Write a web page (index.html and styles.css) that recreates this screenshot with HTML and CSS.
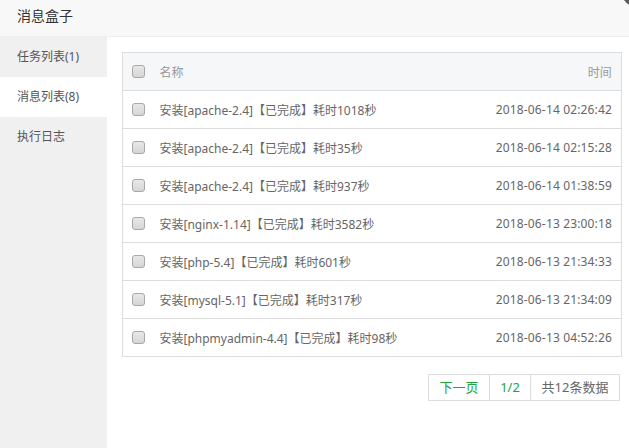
FILE: index.html
```html
<!DOCTYPE html>
<html lang="zh">
<head>
<meta charset="UTF-8">
<title>消息盒子</title>
<link rel="stylesheet" href="styles.css">
</head>
<body>

<div class="box">
<div class="header">消息盒子</div>
<span class="close"></span>

<div class="main">
<div class="side">
<div class="item">任务列表(1)</div>
<div class="item active">消息列表(8)</div>
<div class="item">执行日志</div>
</div>

<div class="content">
<table class="table">
<tr class="head"><td class="ck"><span class="check"></span></td><td>名称</td><td class="time">时间</td></tr>
<tr><td class="ck"><span class="check"></span></td><td>安装[apache-2.4]【已完成】耗时1018秒</td><td class="time">2018-06-14 02:26:42</td></tr>
<tr><td class="ck"><span class="check"></span></td><td>安装[apache-2.4]【已完成】耗时35秒</td><td class="time">2018-06-14 02:15:28</td></tr>
<tr><td class="ck"><span class="check"></span></td><td>安装[apache-2.4]【已完成】耗时937秒</td><td class="time">2018-06-14 01:38:59</td></tr>
<tr><td class="ck"><span class="check"></span></td><td>安装[nginx-1.14]【已完成】耗时3582秒</td><td class="time">2018-06-13 23:00:18</td></tr>
<tr><td class="ck"><span class="check"></span></td><td>安装[php-5.4]【已完成】耗时601秒</td><td class="time">2018-06-13 21:34:33</td></tr>
<tr><td class="ck"><span class="check"></span></td><td>安装[mysql-5.1]【已完成】耗时317秒</td><td class="time">2018-06-13 21:34:09</td></tr>
<tr><td class="ck"><span class="check"></span></td><td>安装[phpmyadmin-4.4]【已完成】耗时98秒</td><td class="time">2018-06-13 04:52:26</td></tr>
</table>

<div class="pager">
<a class="next green">下一页</a><span class="num green">1/2</span><span class="total">共12条数据</span>
</div>
</div>
</div>
</div>

</body>
</html>
```

FILE: styles.css
```css
body {
    margin: 0;
    font-family: "Noto Sans", "Noto Sans CJK SC", sans-serif;
    font-size: 12px;
    color: #666;
    background-color: #fff;
    overflow: hidden;
}
.box { position: relative; height: 448px; }
.header {
    height: 36px;
    line-height: 32px;
    padding-left: 17px;
    font-size: 14px;
    color: #333;
    background-color: #f8f8f8;
    border-bottom: 1px solid #eee;
}
.close {
    position: absolute;
    right: -31px;
    top: -32px;
    width: 40px;
    height: 40px;
    border-radius: 50%;
    background-color: #5a5a5a;
}
.main { display: flex; height: 411px; }
.side { width: 107px; background-color: #f0f0f0; }
.item {
    height: 40px;
    line-height: 40px;
    padding-left: 17px;
    color: #555;
}
.item.active { background-color: #fff; }
.content { padding: 15px 0 0 15px; }
.table {
    width: 500px;
    border-collapse: collapse;
    border: 1px solid #ddd;
}
.table tr { height: 38px; border-bottom: 1px solid #ddd; }
.table td { padding: 0; vertical-align: middle; }
.head { background-color: #f6f7f9; color: #999; }
.ck { width: 37px; padding-left: 9px !important; box-sizing: border-box; }
.time { text-align: right; padding-right: 9px !important; letter-spacing: 0.15px; }
.check {
    display: block;
    width: 11px;
    height: 11px;
    border: 1px solid #a8a8a8;
    border-radius: 3px;
    background: linear-gradient(#e8e8e8, #d6d6d6);
}
.pager {
    display: flex;
    justify-content: flex-end;
    margin: 17px 2px 0 0;
}
.pager a, .pager span {
    box-sizing: border-box;
    height: 27px;
    line-height: 25px;
    border: 1px solid #ddd;
    margin-left: -1px;
    text-align: center;
    font-size: 13px;
    color: #666;
    white-space: nowrap;
}
.pager .next { width: 62px; }
.pager .num { width: 42px; }
.pager .total { width: 90px; }
.pager .green { color: #20a53a; }
```
